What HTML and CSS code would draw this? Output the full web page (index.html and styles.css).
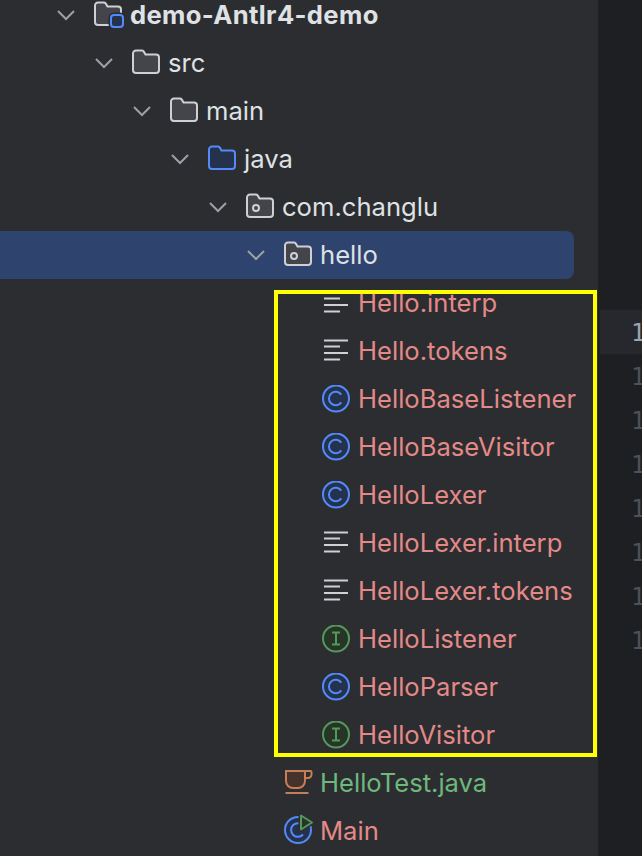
FILE: index.html
```html
<!DOCTYPE html>
<html lang="en">
<head>
<meta charset="utf-8">
<title>Project tree</title>
<link rel="stylesheet" href="styles.css">
</head>
<body>
<svg class="defs" width="0" height="0" aria-hidden="true">
  <defs>
    <symbol id="folder-shape" viewBox="0 0 28 28"><path d="M1 4.5a3 3 0 0 1 3-3h5.8a2.5 2.5 0 0 1 1.9.9L13.5 5.5H24a3 3 0 0 1 3 3V21a3 3 0 0 1-3 3H4a3 3 0 0 1-3-3z"/></symbol>
    <symbol id="chev" viewBox="0 0 24 24"><path d="M4 8l8 8 8-8"/></symbol>
    <symbol id="lines" viewBox="0 0 28 28"><path d="M2 3.5h24M2 9.5h16M2 16h24M2 22.5h16"/></symbol>
    <symbol id="class-c" viewBox="0 0 28 28"><circle cx="14" cy="13.5" r="13"/><path class="glyph" d="M19.3 9.6A6.8 6.8 0 1 0 19.3 17.4"/></symbol>
    <symbol id="iface-i" viewBox="0 0 28 28"><circle cx="14" cy="13.5" r="13"/><path class="glyph" d="M10 7.5h8M14 7.5v12M10 19.5h8"/></symbol>
  </defs>
</svg>

<main class="window">
  <nav class="sidebar">
    <ul class="tree">
      <li class="row d0 strong">
        <svg class="chevron"><use href="#chev"/></svg>
        <svg class="icon folder plain" viewBox="0 0 28 28"><use href="#folder-shape"/><rect class="mod-gap" x="17" y="14" width="12" height="12" rx="3"/><rect class="mod" x="17" y="14" width="12" height="12" rx="3"/></svg>
        <span>demo-Antlr4-demo</span>
      </li>
      <li class="row d1"><svg class="chevron"><use href="#chev"/></svg><svg class="icon folder plain"><use href="#folder-shape"/></svg><span>src</span></li>
      <li class="row d2"><svg class="chevron"><use href="#chev"/></svg><svg class="icon folder plain"><use href="#folder-shape"/></svg><span>main</span></li>
      <li class="row d3"><svg class="chevron"><use href="#chev"/></svg><svg class="icon folder source"><use href="#folder-shape"/></svg><span>java</span></li>
      <li class="row d4"><svg class="chevron"><use href="#chev"/></svg><svg class="icon folder plain" viewBox="0 0 28 28"><use href="#folder-shape"/><circle class="pkg" cx="10" cy="15" r="3"/></svg><span>com.changlu</span></li>
      <li class="row d5 selected"><svg class="chevron"><use href="#chev"/></svg><svg class="icon folder plain" viewBox="0 0 28 28"><use href="#folder-shape"/><circle class="pkg" cx="10" cy="15" r="3"/></svg><span>hello</span></li>

      <li class="row d6 ignored"><span class="slot"></span><svg class="icon text-file"><use href="#lines"/></svg><span>Hello.interp</span></li>
      <li class="row d6 ignored"><span class="slot"></span><svg class="icon text-file"><use href="#lines"/></svg><span>Hello.tokens</span></li>
      <li class="row d6 ignored"><span class="slot"></span><svg class="icon cls"><use href="#class-c"/></svg><span>HelloBaseListener</span></li>
      <li class="row d6 ignored"><span class="slot"></span><svg class="icon cls"><use href="#class-c"/></svg><span>HelloBaseVisitor</span></li>
      <li class="row d6 ignored"><span class="slot"></span><svg class="icon cls"><use href="#class-c"/></svg><span>HelloLexer</span></li>
      <li class="row d6 ignored"><span class="slot"></span><svg class="icon text-file"><use href="#lines"/></svg><span>HelloLexer.interp</span></li>
      <li class="row d6 ignored"><span class="slot"></span><svg class="icon text-file"><use href="#lines"/></svg><span>HelloLexer.tokens</span></li>
      <li class="row d6 ignored"><span class="slot"></span><svg class="icon iface"><use href="#iface-i"/></svg><span>HelloListener</span></li>
      <li class="row d6 ignored"><span class="slot"></span><svg class="icon cls"><use href="#class-c"/></svg><span>HelloParser</span></li>
      <li class="row d6 ignored"><span class="slot"></span><svg class="icon iface"><use href="#iface-i"/></svg><span>HelloVisitor</span></li>

      <li class="row d5 added"><span class="slot"></span>
        <svg class="icon cup" viewBox="0 0 28 28"><path class="cup-body" d="M2 2h19v10a7 7 0 0 1-7 7H9a7 7 0 0 1-7-7z"/><path d="M21 2h5.5a1 1 0 0 1 1 1v2.5a3.5 3.5 0 0 1-3.5 3.5h-3M1.5 24h23"/></svg>
        <span>HelloTest.java</span>
      </li>
      <li class="row d5 ignored"><span class="slot"></span>
        <svg class="icon main-run" viewBox="0 0 28 28"><circle class="ring" cx="14" cy="13" r="13"/><path class="ring-c" d="M19 8.5A6.8 6.8 0 1 0 19 17.5"/><path class="run-gap" d="M17 -1.5v14l11-7z"/><path class="run" d="M17 -1.5v14l11-7z"/></svg>
        <span>Main</span>
      </li>
    </ul>
  </nav>

  <section class="editor">
    <ol class="gutter">
      <li class="current">1</li>
      <li>1</li><li>1</li><li>1</li><li>1</li><li>1</li><li>1</li><li>1</li>
    </ol>
  </section>

  <div class="highlight-box"></div>
</main>
</body>
</html>
```

FILE: styles.css
```css
* { box-sizing: border-box; }
html, body { margin: 0; height: 100%; overflow: hidden; background: #1e1f22; }
.defs { position: absolute; }

.window {
  display: flex;
  height: 856px;
  width: 642px;
  overflow: hidden;
  position: relative;
  font-family: Inter, "Liberation Sans", sans-serif;
}

.sidebar { width: 598px; flex: none; background: #2b2d30; overflow: hidden; }

.tree { list-style: none; margin: -9px 0 0; padding: 0; }

.row {
  display: flex;
  align-items: center;
  height: 48px;
  font-size: 25.6px;
  line-height: 30px;
  color: #dfe1e5;
  white-space: nowrap;
  margin-right: 24px;
}
.strong { font-weight: 700; letter-spacing: 0.35px; }
.d0 { padding-left: 54px; }
.d1 { padding-left: 92px; }
.d2 { padding-left: 130px; }
.d3 { padding-left: 168px; }
.d4 { padding-left: 206px; }
.d5 { padding-left: 244px; }
.d6 { padding-left: 282px; }

.selected { background: #2e436e; border-radius: 0 8px 8px 0; }
.ignored { color: #e38a88; }
.added { color: #6fb87d; }

.chevron, .slot { width: 24px; height: 24px; flex: none; margin-right: 16px; }
.chevron { fill: none; stroke: #9da0a8; stroke-width: 2; }

.icon { width: 28px; height: 28px; flex: none; margin-right: 8px; overflow: visible; fill: none; stroke-width: 2; }

.folder.plain { fill: #43454a; stroke: #ced0d6; }
.folder.source { fill: #25324d; stroke: #548af7; }
.pkg { fill: none; stroke: #ced0d6; }
.mod-gap { fill: #2b2d30; stroke: #2b2d30; stroke-width: 5; }
.mod { fill: #25324d; stroke: #548af7; }

.text-file { stroke: #ced0d6; }
.cls { fill: #25324d; stroke: #548af7; }
.iface { fill: #253627; stroke: #57965c; }
.glyph { fill: none; }

.cup { stroke: #c77d55; }
.cup-body { fill: #45322b; }

.ring { fill: #25324d; stroke: #548af7; }
.ring-c { fill: none; stroke: #548af7; }
.run-gap { fill: #2b2d30; stroke: #2b2d30; stroke-width: 5; stroke-linejoin: round; }
.run { fill: #253627; stroke: #57965c; stroke-linejoin: round; }

.editor { flex: 1; padding: 310px 0 0 2px; overflow: hidden; }
.gutter {
  list-style: none;
  margin: 0;
  padding: 0;
  font-family: "DejaVu Sans Mono", monospace;
  font-size: 24px;
  color: #4e5157;
}
.gutter li { height: 44px; line-height: 46px; padding-left: 31px; }
.gutter .current { background: #26282e; color: #a1a3ab; }

.highlight-box {
  position: absolute;
  left: 274px;
  top: 290px;
  width: 323px;
  height: 467px;
  border: 4px solid #ffff00;
}
```
